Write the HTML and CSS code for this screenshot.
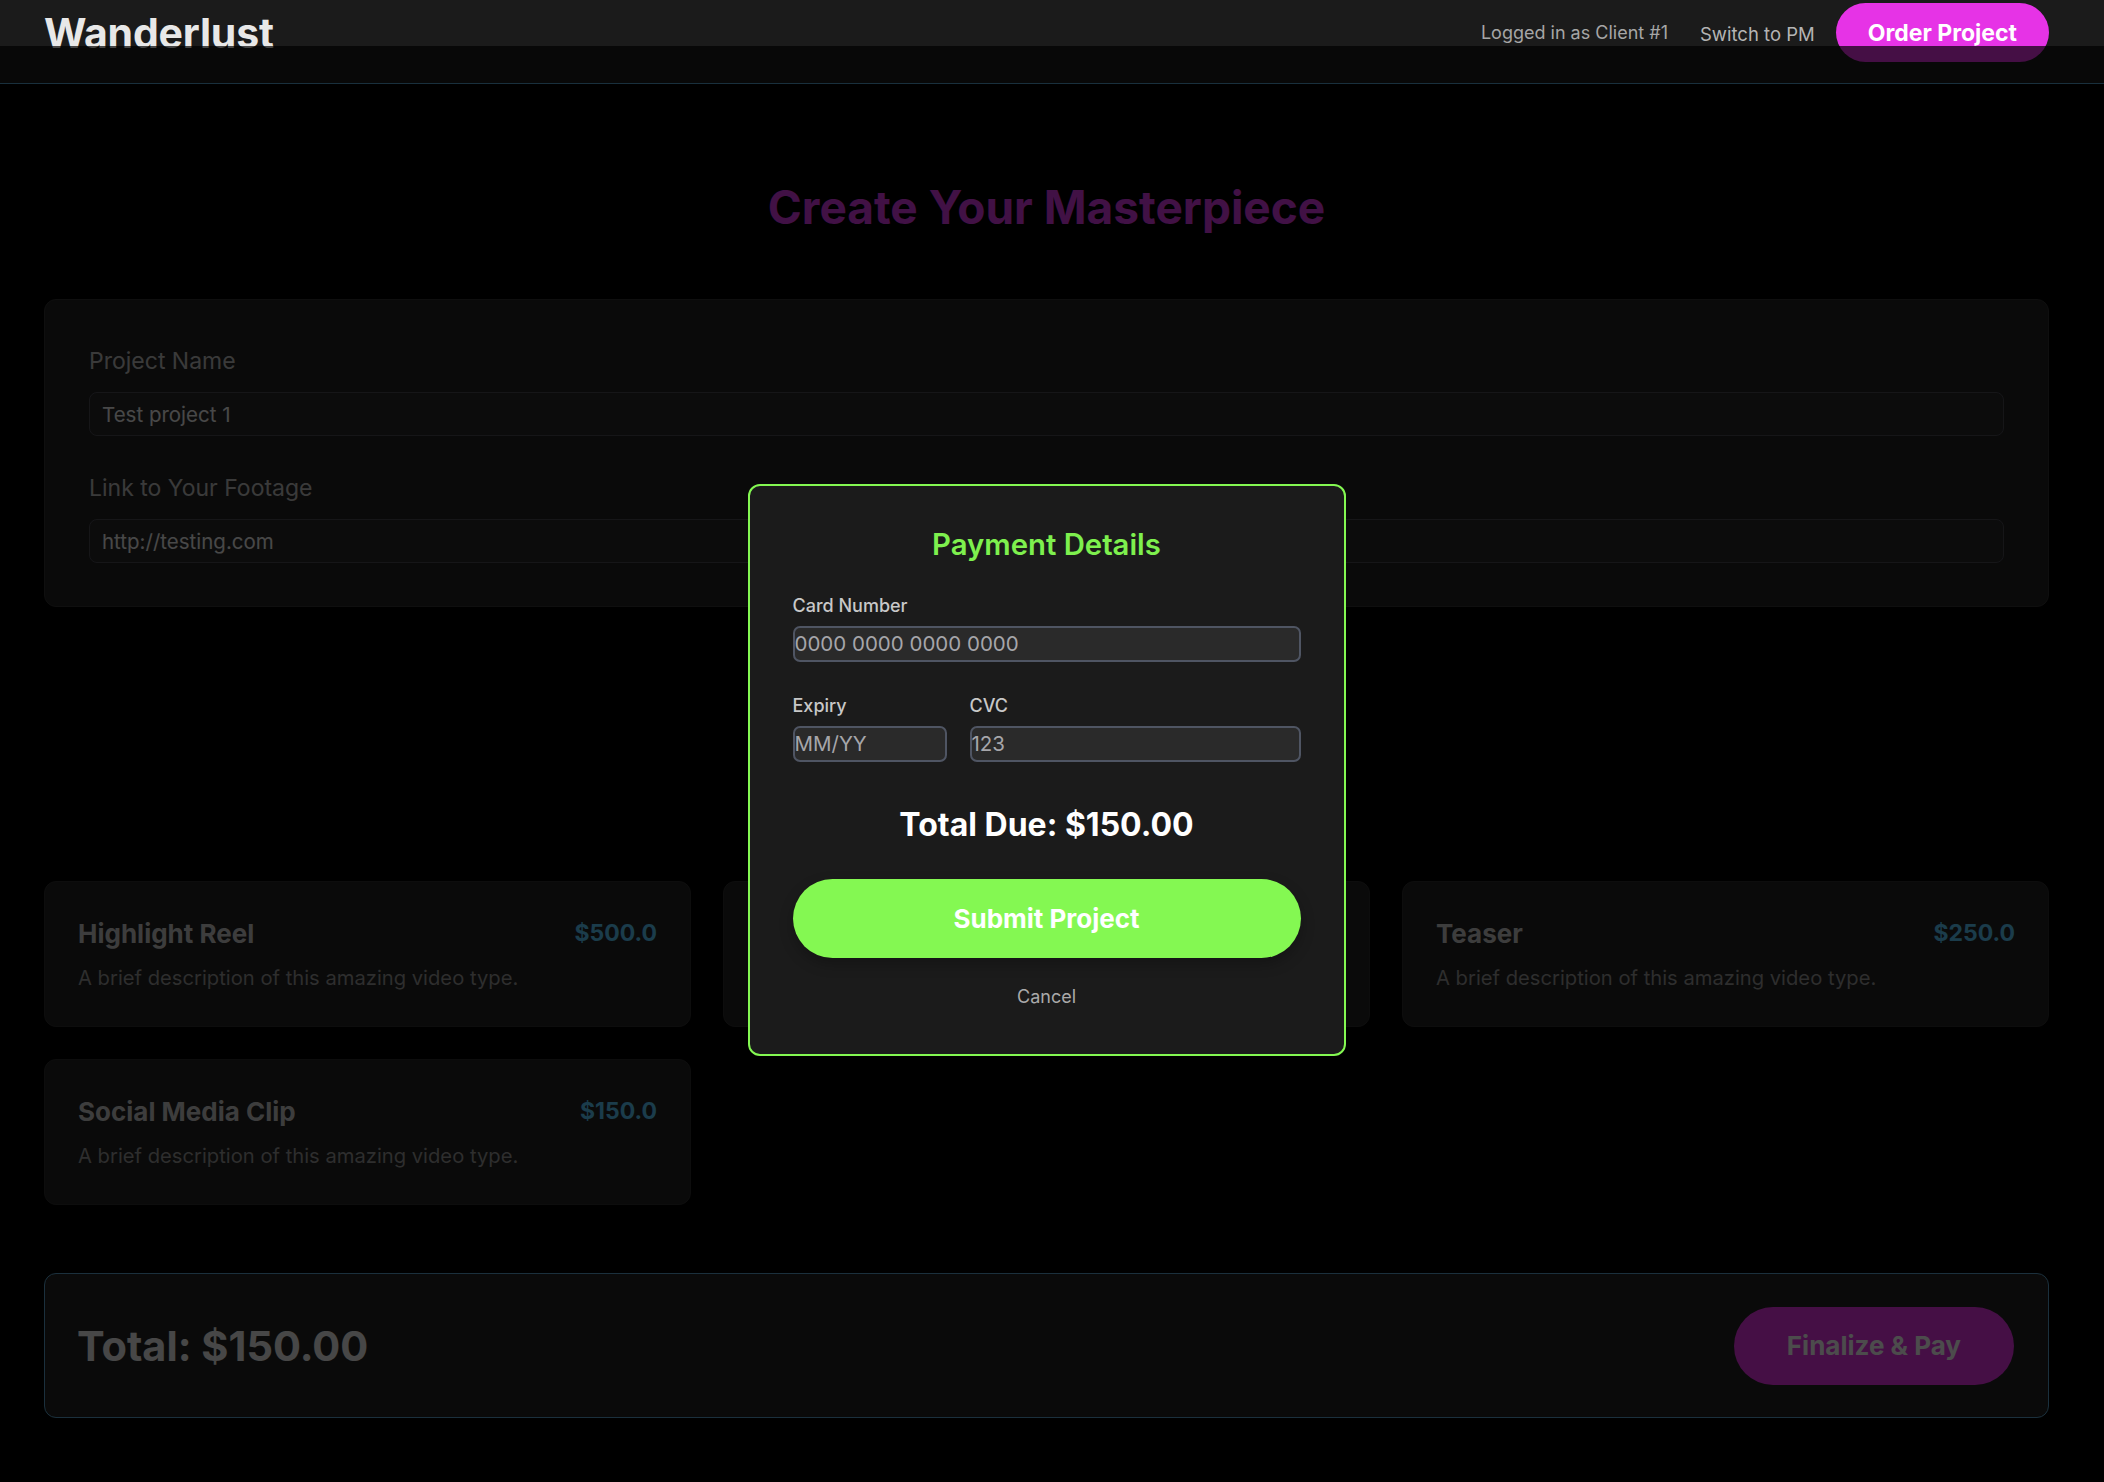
FILE: index.html
```html
<!DOCTYPE html>
<html lang="en">
<head>
<meta charset="utf-8">
<title>Wanderlust</title>
<link rel="stylesheet" href="styles.css">
</head>
<body>
<header class="topbar">
  <div class="brand">Wanderlust</div>
  <nav class="nav">
    <span class="who">Logged in as Client #1</span>
    <button class="switch">Switch to PM</button>
    <button class="pill pill-order">Order Project</button>
  </nav>
</header>

<main class="page">
  <h1 class="title">Create Your Masterpiece</h1>

  <section class="panel form">
    <label class="field-label">Project Name</label>
    <div class="field">Test project 1</div>
    <label class="field-label field-label-2">Link to Your Footage</label>
    <div class="field">http://testing.com</div>
  </section>

  <section class="types">
    <div class="type-card">
      <div class="type-head"><span class="type-name">Highlight Reel</span><span class="type-price">$500.0</span></div>
      <p class="type-desc">A brief description of this amazing video type.</p>
    </div>
    <div class="type-card">
      <div class="type-head"><span class="type-name">Brand Story</span><span class="type-price">$350.0</span></div>
      <p class="type-desc">A brief description of this amazing video type.</p>
    </div>
    <div class="type-card">
      <div class="type-head"><span class="type-name">Teaser</span><span class="type-price">$250.0</span></div>
      <p class="type-desc">A brief description of this amazing video type.</p>
    </div>
    <div class="type-card">
      <div class="type-head"><span class="type-name">Social Media Clip</span><span class="type-price">$150.0</span></div>
      <p class="type-desc">A brief description of this amazing video type.</p>
    </div>
  </section>

  <section class="total-bar">
    <div class="total-text">Total: $150.00</div>
    <button class="pill pill-pay">Finalize &amp; Pay</button>
  </section>
</main>

<div class="backdrop">
  <div class="modal">
    <h2 class="modal-title">Payment Details</h2>
    <div class="m-label">Card Number</div>
    <div class="m-input">0000 0000 0000 0000</div>
    <div class="m-row">
      <div class="m-col m-col-exp">
        <div class="m-label">Expiry</div>
        <div class="m-input">MM/YY</div>
      </div>
      <div class="m-col m-col-cvc">
        <div class="m-label">CVC</div>
        <div class="m-input">123</div>
      </div>
    </div>
    <div class="due">Total Due: $150.00</div>
    <button class="submit">Submit Project</button>
    <button class="cancel">Cancel</button>
  </div>
</div>
</body>
</html>
```

FILE: styles.css
```css
* { box-sizing: border-box; }

html, body {
  margin: 0;
  background: #000;
  font-family: Inter, "Noto Sans", sans-serif;
  color: #fff;
}

button {
  font-family: inherit;
  border: 0;
  background: none;
  padding: 0;
  cursor: pointer;
}

/* ---------- top bar ---------- */
.topbar {
  height: 84px;
  background: #1b1b1b;
  border-bottom: 1px solid #56a0cc;
  display: flex;
  align-items: center;
  justify-content: space-between;
  padding: 0 55px 18px 44px;
}

.brand {
  font-size: 41px;
  font-weight: 700;
  color: #e8e8e8;
  letter-spacing: -0.2px;
}

.nav {
  display: flex;
  align-items: center;
}

.who {
  font-size: 18px;
  color: #a6a6a6;
}

.switch {
  margin-left: 32px;
  margin-right: 21px;
  font-size: 18.5px;
  color: #b4b4b4;
  padding-top: 2px;
}

.pill {
  border-radius: 999px;
  color: #fff;
  font-weight: 700;
}

.pill-order {
  height: 59px;
  padding: 0 32px;
  background: #e633e6;
  font-size: 23px;
}

/* ---------- page ---------- */
.page {
  padding: 0 55px 60px 44px;
}

.title {
  margin: 0;
  padding-top: 95px;
  height: 215px;
  line-height: 56px;
  text-align: center;
  font-size: 46px;
  font-weight: 700;
  color: #d93be6;
}

.panel {
  background: #222;
  border: 1px solid #333;
  border-radius: 12px;
}

.form {
  padding: 46px 44px 43px;
}

.field-label {
  display: block;
  font-size: 23px;
  line-height: 30px;
  color: #c2c2c2;
  margin-bottom: 16px;
}

.field-label-2 {
  margin-top: 37px;
}

.field {
  height: 44px;
  background: #282828;
  border: 1px solid #4a4a52;
  border-radius: 8px;
  padding: 0 12px;
  display: flex;
  align-items: center;
  font-size: 20.5px;
  color: #f0f0f0;
}

/* ---------- video types ---------- */
.types {
  margin-top: 274px;
  display: grid;
  grid-template-columns: repeat(3, 1fr);
  gap: 32px;
}

.type-card {
  height: 146px;
  background: #222;
  border: 1px solid #2e2e2e;
  border-radius: 12px;
  padding: 36px 33px 0;
}

.type-head {
  display: flex;
  justify-content: space-between;
  align-items: center;
  height: 30px;
}

.type-name {
  font-size: 26px;
  font-weight: 700;
  color: #cccccc;
}

.type-price {
  font-size: 23px;
  font-weight: 700;
  color: #5ac8fa;
}

.type-desc {
  margin: 17px 0 0;
  font-size: 20.2px;
  line-height: 26px;
  color: #999999;
}

/* ---------- total ---------- */
.total-bar {
  margin-top: 68px;
  height: 145px;
  background: #222;
  border: 1px solid #5aa2cc;
  border-radius: 12px;
  padding: 0 34px 0 32px;
  display: flex;
  align-items: center;
  justify-content: space-between;
}

.total-text {
  font-size: 41.5px;
  font-weight: 700;
  color: #eeeeee;
}

.pill-pay {
  height: 78px;
  padding: 0 53px;
  background: #e633e6;
  font-size: 26px;
}

/* ---------- modal ---------- */
.backdrop {
  position: fixed;
  top: 46px;
  left: 0;
  right: 0;
  bottom: 0;
  background: rgba(0, 0, 0, 0.7);
  display: flex;
  align-items: center;
  justify-content: center;
  padding: 11px 11px 0 0;
}

.modal {
  width: 598px;
  background: #1b1b1b;
  border: 2px solid #84f852;
  border-radius: 12px;
  padding: 41px 43px 46px;
  display: flex;
  flex-direction: column;
}

.modal-title {
  margin: 0 0 32px;
  text-align: center;
  font-size: 29.3px;
  line-height: 36px;
  font-weight: 600;
  color: #7ef04e;
}

.m-label {
  font-size: 18px;
  line-height: 22px;
  font-weight: 500;
  color: #c8c8c8;
  margin-bottom: 9px;
}

.m-input {
  height: 36px;
  background: #2a2a2a;
  border: 2px solid #4f5563;
  border-radius: 7px;
  display: flex;
  align-items: center;
  padding: 0;
  font-size: 20.5px;
  color: #a6a6aa;
}

.m-row {
  display: flex;
  gap: 23px;
  margin-top: 33px;
}

.m-col-exp { width: 154px; }
.m-col-cvc { flex: 1; }

.due {
  margin-top: 43px;
  text-align: center;
  font-size: 32px;
  line-height: 40px;
  font-weight: 700;
  color: #fff;
}

.submit {
  margin-top: 34px;
  height: 79px;
  border-radius: 999px;
  background: #84f852;
  color: #fff;
  font-size: 26px;
  font-weight: 700;
  box-shadow: 0 6px 14px rgba(0, 0, 0, 0.25);
}

.cancel {
  margin-top: 28px;
  font-size: 18px;
  line-height: 22px;
  color: #aaaaaa;
  align-self: center;
}
```
